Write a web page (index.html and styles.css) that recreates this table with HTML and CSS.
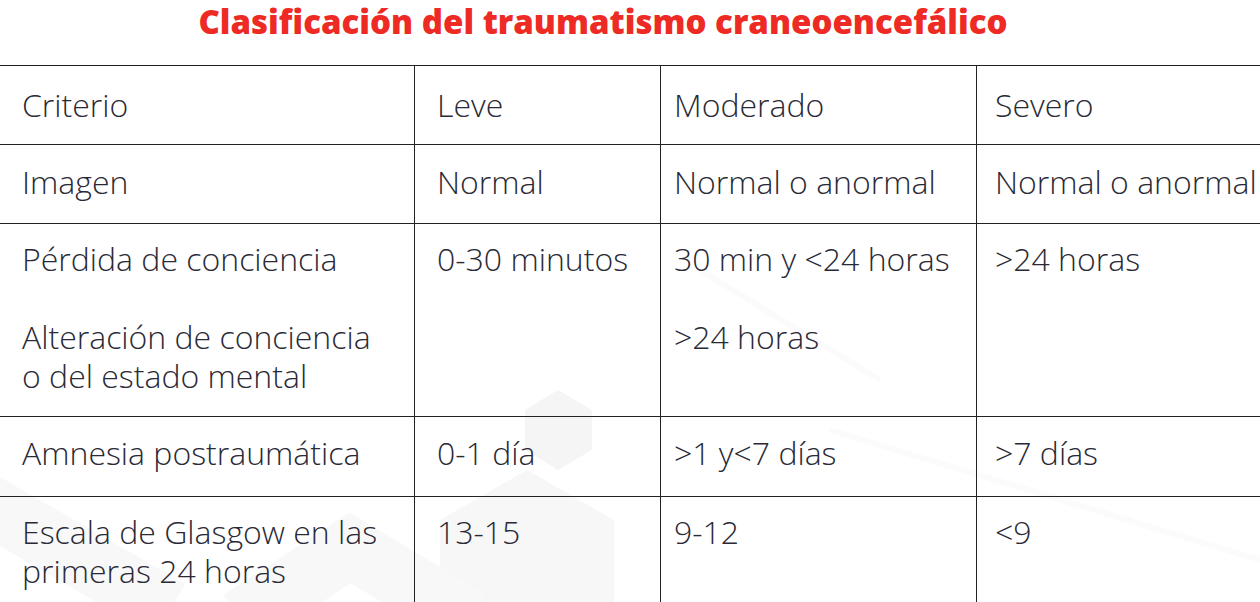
FILE: index.html
```html
<!DOCTYPE html>
<html lang="es">
<head>
<meta charset="utf-8">
<title>Clasificación del traumatismo craneoencefálico</title>
<link rel="stylesheet" href="styles.css">
</head>
<body>
<div class="page">
  <svg class="backdrop" width="1260" height="602" viewBox="0 0 1260 602" aria-hidden="true">
    <polygon class="hex-a" points="558,390 592,410 592,450 558,470 525,450 525,410"/>
    <polygon class="hex-b" points="527,470 614,520 614,620 527,670 440,620 440,520"/>
    <polyline class="band" points="-20,500 170,610"/>
    <polyline class="band" points="240,620 350,548 470,620"/>
    <polyline class="streak" points="700,270 880,380"/>
    <polyline class="streak" points="830,430 1260,560"/>
  </svg>

  <h1 class="title">Clasificación del traumatismo craneoencefálico</h1>

  <div class="grid">
    <div class="cell r1 c1">Criterio</div>
    <div class="cell r1 c2">Leve</div>
    <div class="cell r1 c3">Moderado</div>
    <div class="cell r1 c4">Severo</div>

    <div class="cell r2 c1">Imagen</div>
    <div class="cell r2 c2">Normal</div>
    <div class="cell r2 c3">Normal o anormal</div>
    <div class="cell r2 c4">Normal o anormal</div>

    <div class="cell r3 c1">
      <p class="para">Pérdida de conciencia</p>
      <p class="para">Alteración de conciencia<br>o del estado mental</p>
    </div>
    <div class="cell r3 c2">0-30 minutos</div>
    <div class="cell r3 c3">
      <p class="para">30 min y &lt;24 horas</p>
      <p class="para">&gt;24 horas</p>
    </div>
    <div class="cell r3 c4">&gt;24 horas</div>

    <div class="cell r4 c1">Amnesia postraumática</div>
    <div class="cell r4 c2">0-1 día</div>
    <div class="cell r4 c3">&gt;1 y&lt;7 días</div>
    <div class="cell r4 c4">&gt;7 días</div>

    <div class="cell r5 c1">Escala de Glasgow en las<br>primeras 24 horas</div>
    <div class="cell r5 c2">13-15</div>
    <div class="cell r5 c3">9-12</div>
    <div class="cell r5 c4">&lt;9</div>
  </div>
</div>
</body>
</html>
```

FILE: styles.css
```css
html, body {
  margin: 0;
  padding: 0;
  background: #ffffff;
}

body {
  width: 1260px;
  height: 602px;
  overflow: hidden;
  font-family: "Open Sans", "Liberation Sans", sans-serif;
}

.page {
  position: relative;
  width: 1260px;
  height: 602px;
  overflow: hidden;
}

.backdrop {
  position: absolute;
  left: 0;
  top: 0;
  z-index: 0;
}

.hex-a {
  fill: #f5f5f6;
}

.hex-b {
  fill: #f7f7f8;
}

.band {
  fill: none;
  stroke: #f8f8f9;
  stroke-width: 60;
}

.streak {
  fill: none;
  stroke: #fbfbfc;
  stroke-width: 6;
}

.title {
  position: relative;
  z-index: 1;
  margin: 0 0 21px 0;
  padding-right: 54px;
  height: 44px;
  line-height: 44px;
  text-align: center;
  font-size: 33px;
  font-weight: 800;
  color: #ee2a24;
}

.grid {
  position: relative;
  z-index: 1;
  display: grid;
  grid-template-columns: 414px 246px 316px 310px;
  width: 1286px;
  border-top: 1px solid #222226;
  font-size: 32px;
  font-weight: 300;
  line-height: 39px;
  color: #2a2a36;
}

.cell {
  box-sizing: border-box;
  border-bottom: 1px solid #222226;
  white-space: nowrap;
}

.r1 {
  padding-top: 19px;
  padding-bottom: 20px;
}

.r2 {
  padding-top: 17px;
  padding-bottom: 22px;
}

.r3 {
  padding-top: 15px;
  padding-bottom: 21px;
}

.r4 {
  padding-top: 16px;
  padding-bottom: 24px;
}

.r5 {
  padding-top: 15px;
  padding-bottom: 20px;
}

.c1 {
  padding-left: 22px;
}

.c2 {
  padding-left: 22px;
  border-left: 1px solid #222226;
}

.c3 {
  padding-left: 13px;
  border-left: 1px solid #222226;
}

.c4 {
  padding-left: 18px;
  border-left: 1px solid #222226;
}

.para {
  margin: 0 0 39px 0;
}

.para:last-child {
  margin-bottom: 0;
}
```
